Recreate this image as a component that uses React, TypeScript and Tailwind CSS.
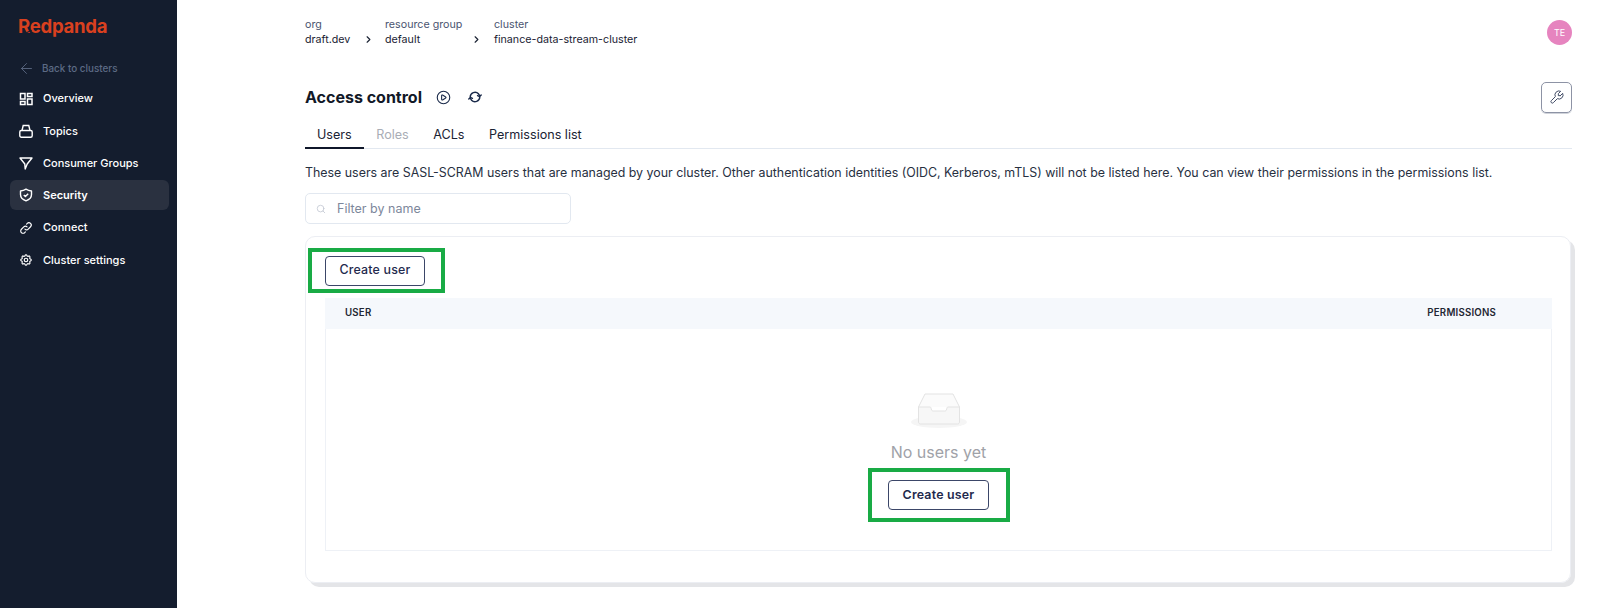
import React from "react";
import { ArrowLeft, Search, CirclePlay, ChevronRight } from "lucide-react";
import { HiOutlineCog, HiOutlineLink } from "react-icons/hi";
import { TbTool } from "react-icons/tb";

function NavIcon({ name }: { name: string }) {
  const c = "w-[14px] h-[14px] text-white";
  if (name === "Overview")
    return (
      <svg viewBox="0 0 14 14" className={c} fill="none" stroke="currentColor" strokeWidth="1.5">
        <rect x="1.5" y="1.5" width="4.5" height="5.5" />
        <rect x="8.5" y="1.5" width="4.5" height="3" />
        <rect x="1.5" y="9.5" width="4.5" height="3" />
        <rect x="8.5" y="7" width="4.5" height="5.5" />
      </svg>
    );
  if (name === "Topics")
    return (
      <svg viewBox="0 0 14 14" className={c} fill="none" stroke="currentColor" strokeWidth="1.4">
        <path d="M3 6.5 4.2 1.5h5.6L11 6.5" />
        <rect x="0.8" y="6.5" width="12.4" height="6.7" rx="1.5" />
      </svg>
    );
  if (name === "Consumer Groups")
    return (
      <svg viewBox="0 0 14 14" className={c} fill="none" stroke="currentColor" strokeWidth="1.4" strokeLinejoin="round">
        <path d="M1 2h12L8.2 8 6.2 13 5.8 8z" />
      </svg>
    );
  if (name === "Security")
    return (
      <svg viewBox="0 0 14 14" className={c} fill="none" stroke="currentColor" strokeWidth="1.4" strokeLinejoin="round">
        <path d="M7 1.2c1.6 1 3.4 1.6 5.5 1.8v3.6c0 3-2.2 5.2-5.5 6.2-3.3-1-5.5-3.2-5.5-6.2V3C3.6 2.8 5.4 2.2 7 1.2z" />
        <path d="m4.8 6.9 1.6 1.6 2.8-2.8" />
      </svg>
    );
  if (name === "Connect") return <HiOutlineLink className={c} />;
  return <HiOutlineCog className={c} />;
}

const nav = ["Overview", "Topics", "Consumer Groups", "Security", "Connect", "Cluster settings"];

function CreateUser({ strong }: { strong?: boolean }) {
  return (
    <button className={"h-[30px] rounded-[4px] border border-[#3b4668] bg-white text-[12.4px] text-[#1f2a4d] tracking-[0.2px] " + (strong ? "w-[101px] font-semibold" : "w-[100px] font-medium")}>
      Create user
    </button>
  );
}

function Crumb({ label, value, w }: { label: string; value: string; w: string }) {
  return (
    <div className={w + " flex flex-col text-[10.7px] leading-[15px]"}>
      <span className="text-[#4a5470]">{label}</span>
      <span className="text-[#1a2233]">{value}</span>
    </div>
  );
}

export default function App() {
  return (
    <div className="flex w-[1600px] h-[608px] overflow-hidden bg-white text-[#1a202c] font-['Inter',sans-serif]">
      <aside className="w-[177px] shrink-0 bg-[#141d2e] flex flex-col pl-[10px] pr-[8px]">
        <div className="h-[53.5px] pt-[14px] pl-[8px]">
          <div className="relative w-fit text-[18.6px] leading-[25px] font-bold text-[#d9401f] tracking-[-0.3px]">
            Redpanda
            <span className="absolute left-[8px] top-[17px] w-[6px] h-[1px] bg-[#141d2e] -rotate-[25deg]" />
          </div>
        </div>
        <div className="h-[30px] flex items-center gap-[7px] pl-[8px] text-[#5d6b85] text-[9.9px] font-medium">
          <ArrowLeft className="w-[17px] h-[17px]" strokeWidth={1.25} />
          <span>Back to clusters</span>
        </div>
        <nav className="flex flex-col gap-[2.3px]">
          {nav.map((n) => (
            <div key={n} className={"h-[30px] flex items-center gap-[10px] pl-[9px] rounded-[6px] text-white text-[11px] font-medium " + (n === "Security" ? "bg-[#2a3140] font-semibold" : "")}>
              <NavIcon name={n} />
              <span>{n}</span>
            </div>
          ))}
        </nav>
      </aside>
      <main className="flex-1 pl-[128px] pr-[28px] flex flex-col min-w-0">
        <div className="h-[68px] flex items-start justify-between pt-[17px]">
          <div className="flex items-center">
            <Crumb label="org" value="draft.dev" w="w-[58px]" />
            <ChevronRight className="w-[11px] h-[11px] mt-[15px] mr-[11px] text-[#1a2233]" strokeWidth={2.5} />
            <Crumb label="resource group" value="default" w="w-[86px]" />
            <ChevronRight className="w-[11px] h-[11px] mt-[15px] mr-[12px] text-[#1a2233]" strokeWidth={2.5} />
            <Crumb label="cluster" value="finance-data-stream-cluster" w="w-[160px]" />
          </div>
          <div className="w-[25px] h-[25px] mt-[3px] rounded-full bg-[#e684bf] text-white text-[9px] flex items-center justify-center">TE</div>
        </div>
        <div className="h-[48px] flex items-center justify-between pt-[10px]">
          <div className="flex items-center">
            <h1 className="text-[16px] font-bold text-[#111827]">Access control</h1>
            <CirclePlay className="w-[15px] h-[15px] ml-[14px] text-[#1a2a4a]" strokeWidth={1.75} />
            <svg viewBox="0 0 14 14" className="w-[14px] h-[14px] ml-[17px] text-[#1a2a4a]" fill="none" stroke="currentColor" strokeWidth="1.4" strokeLinecap="round" strokeLinejoin="round">
              <path d="M2.2 7a4.8 4.8 0 0 1 8.3-3.2l1 1.6" />
              <path d="M13.2 4.9 11.6 6.6 9.6 5.6" />
              <path d="M11.8 7a4.8 4.8 0 0 1-8.3 3.2l-1-1.6" />
              <path d="M.8 9.1 2.4 7.4 4.4 8.4" />
            </svg>
          </div>
          <div className="w-[31px] h-[31px] rounded-[5px] border border-[#8d93a5] shadow-[0_1px_0_#d0d3da] flex items-center justify-center">
            <TbTool className="w-[16px] h-[16px] text-[#424c66] -scale-x-100" strokeWidth={1.5} />
          </div>
        </div>
        <div className="mt-[4px] flex gap-[0.5px] h-[29px] border-b border-[#e2e8f0] text-[12.6px] leading-[29px] text-[#1a2233]">
          <div className="px-3 h-[29px] border-b-2 border-[#0f172a]">Users</div>
          <div className="px-3 text-[#a9adb6]">Roles</div>
          <div className="px-3">ACLs</div>
          <div className="px-3">Permissions list</div>
        </div>
        <p className="mt-[15px] text-[12.4px] leading-[18px] text-[#27303f] whitespace-nowrap">
          These users are SASL-SCRAM users that are managed by your cluster. Other authentication identities (OIDC, Kerberos, mTLS) will not be listed here. You can view their permissions in the permissions list.
        </p>
        <div className="mt-[11px] w-[266px] h-[31px] pt-[1px] rounded-[5px] border border-[#e2e8f0] flex items-center pl-[10px] gap-[11px] text-[12.5px] text-[#7d879b]">
          <Search className="w-[10px] h-[10px] text-[#c3c8d2]" strokeWidth={2} />
          <span>Filter by name</span>
        </div>
        <section className="mt-[12px] w-[1266px] h-[347px] rounded-[10px] border border-[#eceef3] shadow-[4px_4px_0_#e4e5e8] flex flex-col pb-[31px] shrink-0">
          <div className="pl-[2px] pt-[11px]">
            <div className="w-[137px] h-[45px] border-[4px] border-[#19ab45] flex items-center pl-[13px]">
              <CreateUser />
            </div>
          </div>
          <div className="mt-[5px] ml-[19px] w-[1227px] flex-1 border border-[#eef1f6] flex flex-col">
            <div className="h-[31px] -mt-px -mx-px bg-[#f5f8fc] flex items-center justify-between pl-[20px] pr-[56px] text-[9.7px] font-semibold text-[#1f2733] tracking-[0.2px]">
              <span>USER</span>
              <span>PERMISSIONS</span>
            </div>
            <div className="flex-1 flex flex-col items-center pt-[64px]">
              <svg viewBox="0 0 58 36" className="w-[58px] h-[36px]">
                <ellipse cx="29" cy="29" rx="28" ry="6" fill="#f5f5f5" />
                <path d="M8.5 14 15 1h28l6.5 13" fill="#fbfbfb" stroke="#e3e3e3" />
                <path d="M8.5 14H20c1 0 1 1 1.3 2 .3 1.6 1 2 2 2h11.4c1 0 1.7-.4 2-2 .3-1 .3-2 1.3-2h11.5v15c0 1-.8 2-2 2h-37c-1.2 0-2-1-2-2z" fill="#f7f7f7" stroke="#e3e3e3" />
              </svg>
              <div className="mt-[12px] text-[16px] leading-[22px] text-[#a0a2a8]">No users yet</div>
              <div className="mt-[5px] w-[142px] h-[54px] border-[4px] border-[#19ab45] flex items-center justify-center">
                <CreateUser strong />
              </div>
            </div>
          </div>
        </section>
      </main>
    </div>
  );
}
